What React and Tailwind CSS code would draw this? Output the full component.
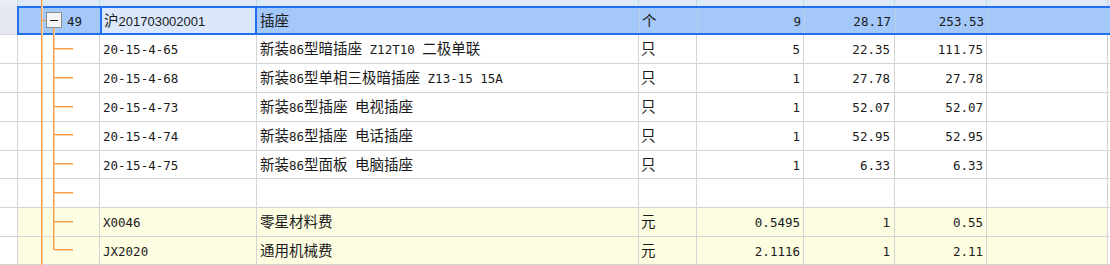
import React from 'react';

const COLS = 'grid-cols-[18px_82px_157px_382px_58px_107px_91px_92px_121px_2px]';

// split text into CJK and latin runs so each gets its own font
const Txt = ({ s, sans }) => {
  if (!s) return null;
  const parts = s.split(/([\u3000-\u9fff]+)/).filter(Boolean);
  return (
    <span className="whitespace-pre">
      {parts.map((p, i) =>
        /[\u3000-\u9fff]/.test(p) ? (
          <span key={i} className="font-['Noto_Sans_CJK_SC',sans-serif] text-[14.5px]">{p}</span>
        ) : (
          <span
            key={i}
            className={
              sans
                ? "font-['Liberation_Sans',sans-serif] text-[13px]"
                : "font-['DejaVu_Sans_Mono',monospace] text-[12.5px]"
            }
          >
            {p}
          </span>
        )
      )}
    </span>
  );
};

const children = [
  { code: '20-15-4-65', name: '新装86型暗插座 Z12T10 二极单联', unit: '只', a: '5', b: '22.35', c: '111.75', h: 'h-[29px]' },
  { code: '20-15-4-68', name: '新装86型单相三极暗插座 Z13-15 15A', unit: '只', a: '1', b: '27.78', c: '27.78', h: 'h-[29px]' },
  { code: '20-15-4-73', name: '新装86型插座 电视插座', unit: '只', a: '1', b: '52.07', c: '52.07', h: 'h-[29px]' },
  { code: '20-15-4-74', name: '新装86型插座 电话插座', unit: '只', a: '1', b: '52.95', c: '52.95', h: 'h-[29px]' },
  { code: '20-15-4-75', name: '新装86型面板 电脑插座', unit: '只', a: '1', b: '6.33', c: '6.33', h: 'h-[28px]' },
  { code: '', name: '', unit: '', a: '', b: '', c: '', h: 'h-[29px]' },
  { code: 'X0046', name: '零星材料费', unit: '元', a: '0.5495', b: '1', c: '0.55', h: 'h-[29px]', yellow: true },
  { code: 'JX2020', name: '通用机械费', unit: '元', a: '2.1116', b: '1', c: '2.11', h: 'h-[28px]', yellow: true },
];

const cell = 'border-r border-b border-[#d4d4d4] flex items-center overflow-hidden pb-[2px]';

const Row = ({ r }) => {
  const bg = r.yellow ? 'bg-[#fdfde1]' : 'bg-white';
  return (
    <div className={`grid ${COLS} ${r.h} text-[#1a1a1a]`}>
      <div className={`${cell} bg-white`} />
      <div className={`${cell} ${bg}`} />
      <div className={`${cell} ${bg} pl-[3px]`}><Txt s={r.code} /></div>
      <div className={`${cell} ${bg} pl-[3px]`}><Txt s={r.name} /></div>
      <div className={`${cell} ${bg} pl-[2px]`}><Txt s={r.unit} /></div>
      <div className={`${cell} ${bg} justify-end pr-[3px]`}><Txt s={r.a} /></div>
      <div className={`${cell} ${bg} justify-end pr-[4px]`}><Txt s={r.b} /></div>
      <div className={`${cell} ${bg} justify-end pr-[3px]`}><Txt s={r.c} /></div>
      <div className={`${cell} ${bg}`} />
      <div className="border-b border-[#d4d4d4] bg-white" />
    </div>
  );
};

const centers = [48, 77, 106, 134, 163, 192, 221, 249];

const TreeLines = () => (
  <svg className="absolute left-0 top-0 pointer-events-none" width="100" height="265" viewBox="0 0 100 265">
    <g fill="#fcd2a8">
      <rect x="42" y="0" width="1" height="265" />
      <rect x="54" y="29" width="1" height="221" />
      {centers.map((y) => (
        <rect key={y} x="55" y={y + 1} width="18" height="1" />
      ))}
    </g>
    <g fill="#f99b42">
      <rect x="41" y="0" width="1" height="265" />
      <rect x="42" y="20" width="4" height="1" />
      <rect x="53" y="28" width="1" height="222" />
      {centers.map((y) => (
        <rect key={y} x="54" y={y} width="19" height="1" />
      ))}
    </g>
    <rect x="46" y="12" width="16" height="16" fill="#8c8c8c" />
    <rect x="47" y="13" width="14" height="14" fill="#f5f5f5" />
    <rect x="50" y="20" width="8" height="1" fill="#1a1a1a" />
  </svg>
);

export default function App() {
  return (
    <div className="relative w-[1110px] h-[265px] overflow-hidden bg-white">
      {/* strip of the row above */}
      <div className={`grid ${COLS} h-[6px]`}>
        <div className="bg-[#e9ecf2] border-r border-[#cfd6e2]" />
        {Array.from({ length: 8 }).map((_, i) => (
          <div key={i} className="bg-[#dde8f9] border-r border-[#c9d5e8]" />
        ))}
        <div className="bg-[#dde8f9]" />
      </div>

      {/* selected group row */}
      <div className="relative">
        <div className={`grid ${COLS} h-[29px] text-[#1a1a1a]`}>
          <div className="bg-[#e4e8f0] border-r border-b border-[#d4d4d4]" />
          <div className="bg-[#a4c8f8] flex items-center pl-[49px] pb-[1px]">
            <Txt s="49" />
          </div>
          <div className="bg-[#dbe8fc] border-x-2 border-[#1f6ff0] flex items-center pl-[2px] pb-[1px]">
            <Txt s="沪201703002001" sans />
          </div>
          <div className="bg-[#a4c8f8] flex items-center pl-[3px] pb-[1px]"><Txt s="插座" /></div>
          <div className="bg-[#a4c8f8] border-l border-[#b8cfee] flex items-center pl-[2px] pb-[1px]"><Txt s="个" /></div>
          <div className="bg-[#a4c8f8] border-l border-[#b8cfee] flex items-center justify-end pr-[3px] pb-[1px]"><Txt s="9" /></div>
          <div className="bg-[#a4c8f8] border-l border-[#b8cfee] flex items-center justify-end pr-[4px] pb-[1px]"><Txt s="28.17" /></div>
          <div className="bg-[#a4c8f8] border-l border-[#b8cfee] flex items-center justify-end pr-[3px] pb-[1px]"><Txt s="253.53" /></div>
          <div className="bg-[#a4c8f8] border-l border-[#b8cfee]" />
          <div className="bg-[#a4c8f8]" />
        </div>
        <div className="absolute left-[17px] top-0 right-[-2px] h-[29px] border-2 border-[#1f6ff0] pointer-events-none" />
      </div>

      {children.map((r, i) => (
        <Row key={i} r={r} />
      ))}

      <TreeLines />
    </div>
  );
}
